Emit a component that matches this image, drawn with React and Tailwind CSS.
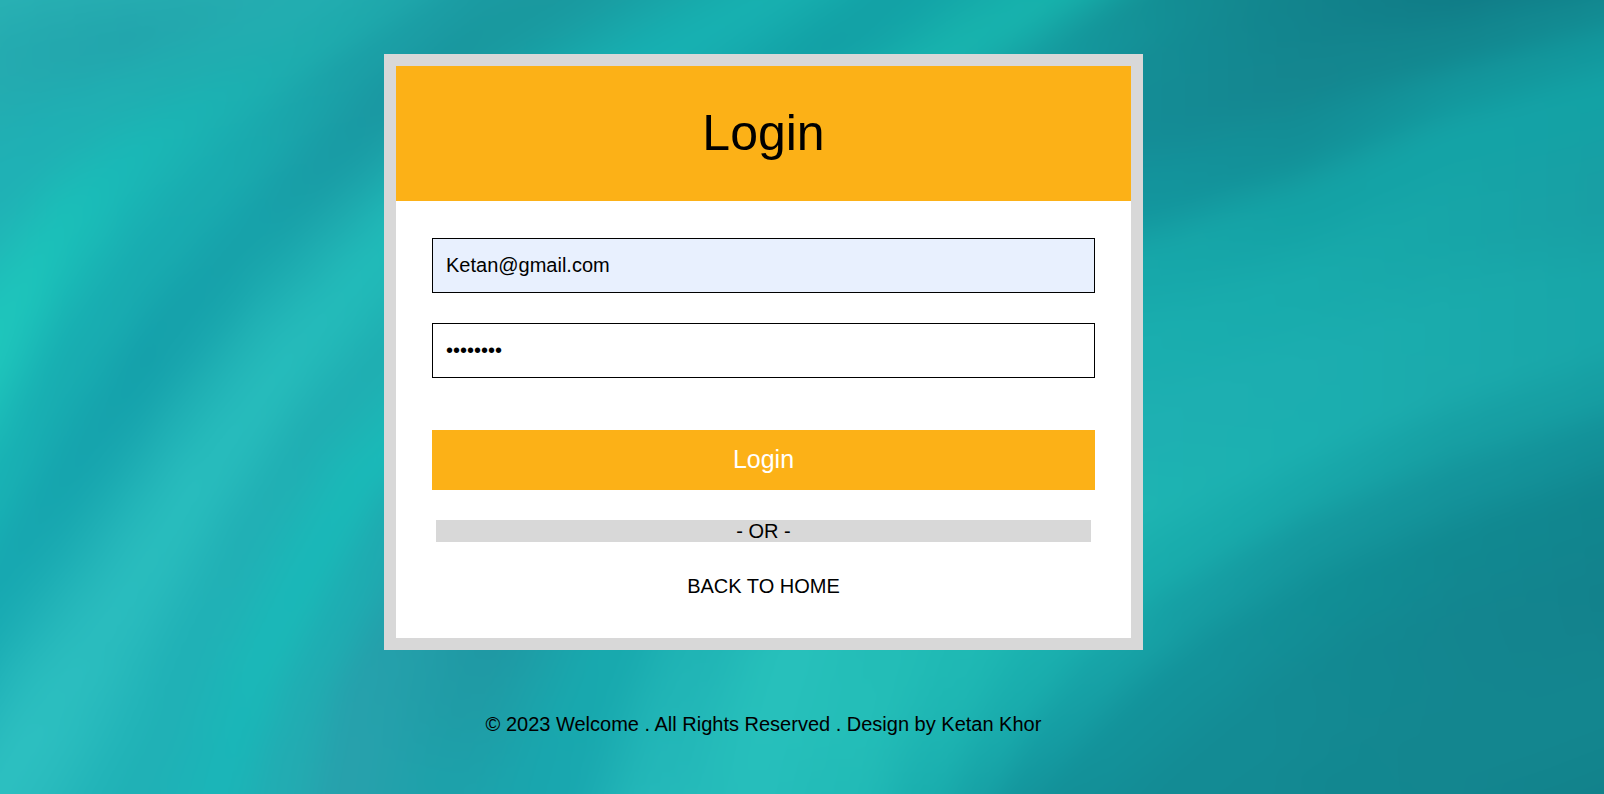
// Gradient mesh for the backdrop: every row is one fold line running from the
// lower left to the upper right, as [x, y, colour] knots.
const folds = [
  [[-60, 0, '2ab3b5'], [-20, -30, '2ab3b5'], [50, -40, '29b2b4'], [120, -45, '29b1b3'], [200, -50, '27afb1'], [260, -55, '24aeb1'], [320, -60, '24aeb1']],
  [[-60, 90, '23abb0'], [0, 65, '24abb0'], [60, 52, '23a8ae'], [130, 42, '22a6ad'], [190, 25, '23a9ae'], [250, 0, '24acb0'], [330, -40, '24aeb1']],
  [[-60, 230, '20b3b6'], [0, 180, '1fb1b5'], [50, 135, '1fb0b4'], [110, 98, '20afb2'], [180, 70, '20adb0'], [270, 28, '22adb0'], [370, -30, '22adb0']],
  [[-60, 430, '1fc6bc'], [0, 335, '1fc6bc'], [60, 235, '1bc0b9'], [120, 170, '1ab9b7'], [200, 110, '1bb3b3'], [310, 50, '1eacae'], [440, -25, '1fa5aa']],
  [[-60, 580, '18b0b4'], [0, 492, '18b1b4'], [65, 375, '18adb1'], [150, 265, '18abb0'], [235, 165, '19abaf'], [350, 72, '1ba0a7'], [500, -25, '1b9ba2']],
  [[-60, 680, '17a9b1'], [0, 570, '17a8b1'], [60, 480, '16a5ae'], [140, 362, '15a1ab'], [250, 230, '17a2aa'], [385, 100, '1a98a2'], [450, 54, '19989f'], [580, -25, '1a999f']],
  [[-40, 850, '2cbfc0'], [30, 740, '2cbfc0'], [110, 625, '2abcbe'], [190, 500, '28bcbd'], [280, 375, '26bbbb'], [400, 235, '20bab8'], [673, 54, '17b0b2'], [810, -25, '17b0af']],
  [[110, 850, '20b1b6'], [165, 740, '20b1b6'], [195, 650, '20b1b6'], [245, 540, '21b0b5'], [310, 435, '20afb3'], [400, 340, '1fafb2'], [820, 54, '13a1a6'], [920, -25, '13a2a6']],
  [[210, 850, '1cb4b8'], [238, 740, '1ab6b8'], [262, 665, '1bb8b8'], [310, 570, '1ab8b8'], [360, 480, '1ab9b8'], [440, 400, '1ab9b8'], [954, 54, '18b3ae'], [1080, -25, '16b2ac']],
  [[270, 850, '22adb3'], [288, 760, '22acb2'], [308, 690, '20adb2'], [345, 610, '1eadb2'], [395, 520, '1faab0'], [480, 440, '1ca8ae'], [1086, 54, '14969c'], [1210, -25, '138a90'], [1400, -60, '107c87'], [1680, -100, '107c87']],
  [[335, 850, '27a1ac'], [350, 760, '27a1ac'], [360, 690, '26a1ac'], [385, 640, '24a0ab'], [440, 560, '24a0ab'], [540, 480, '209aa4'], [1140, 62, '148e96'], [1300, 22, '12848d'], [1450, -8, '107c87'], [1680, -55, '107c87']],
  [[435, 850, '1fa1ab'], [450, 780, '1da1aa'], [468, 710, '1f9ca6'], [487, 650, '1f99a4'], [540, 570, '1f99a4'], [640, 480, '1a9ca4'], [1140, 125, '148c96'], [1300, 75, '14868f'], [1450, 48, '12878f'], [1680, -5, '128d94']],
  [[545, 850, '19a7af'], [560, 794, '19a7af'], [585, 715, '18a8ae'], [612, 650, '18a9ae'], [660, 570, '18a9ae'], [740, 490, '18a9ae'], [1140, 200, '13959d'], [1300, 145, '138f97'], [1450, 90, '13969c'], [1680, 22, '12989d']],
  [[640, 850, '24b8b9'], [655, 794, '24b8b9'], [675, 715, '22b6b7'], [695, 650, '20b4b5'], [740, 580, '20b4b5'], [820, 500, '1fb3b4'], [1140, 270, '17a8aa'], [1300, 208, '14a2a5'], [1450, 140, '14a3a6'], [1680, 70, '13a1a5']],
  [[735, 850, '26bebb'], [750, 794, '26bebb'], [770, 715, '27c0bb'], [790, 650, '27c0bb'], [840, 590, '26bfba'], [920, 510, '21b8b5'], [1140, 350, '1aaeaf'], [1300, 290, '18abac'], [1450, 225, '17a6a8'], [1680, 190, '199ba2']],
  [[835, 850, '22bbb7'], [850, 794, '22bbb7'], [865, 715, '24beb8'], [885, 650, '23bdb7'], [930, 600, '22bbb5'], [990, 530, '20b6b3'], [1140, 430, '1eb0b2'], [1300, 375, '1caeb0'], [1450, 325, '1aabac'], [1680, 270, '17a4a7']],
  [[910, 850, '1aaeae'], [930, 794, '1aaeae'], [945, 720, '1eb6b3'], [970, 650, '1fb9b4'], [1010, 605, '1fb8b3'], [1060, 560, '1eb6b2'], [1140, 510, '1eb4b2'], [1300, 445, '1bafb0'], [1450, 385, '1baaac'], [1680, 315, '17a4a7']],
  [[960, 850, '17a2a6'], [980, 794, '17a2a6'], [1005, 725, '19abac'], [1050, 650, '1ab0af'], [1080, 625, '1ab0af'], [1110, 600, '19afae'], [1150, 572, '19adad'], [1300, 492, '18a8aa'], [1450, 437, '17a0a4'], [1680, 370, '169da2']],
  [[995, 850, '14969d'], [1020, 794, '14969d'], [1055, 735, '159da3'], [1105, 665, '17a3a7'], [1125, 650, '17a3a7'], [1145, 635, '17a2a6'], [1180, 612, '169fa4'], [1310, 542, '15989e'], [1450, 488, '14949b'], [1680, 415, '128f97']],
  [[1035, 850, '139098'], [1065, 794, '139098'], [1105, 750, '13929a'], [1155, 705, '13929a'], [1180, 682, '13929a'], [1205, 665, '13929a'], [1235, 645, '139199'], [1330, 595, '118e95'], [1450, 550, '118991'], [1680, 480, '10848d']],
  [[1110, 870, '138b94'], [1140, 830, '138b94'], [1175, 790, '138b94'], [1210, 760, '138b94'], [1235, 740, '138b94'], [1260, 720, '138b94'], [1290, 700, '138a93'], [1370, 660, '128891'], [1470, 635, '13858f'], [1680, 575, '12818b']],
  [[1200, 900, '138891'], [1230, 880, '138891'], [1260, 860, '138891'], [1290, 840, '138891'], [1320, 825, '138891'], [1345, 810, '128790'], [1370, 795, '128790'], [1430, 770, '13868f'], [1520, 740, '13868f'], [1680, 680, '13868f']],
  [[1300, 950, '128790'], [1330, 940, '128790'], [1360, 930, '128790'], [1390, 920, '128790'], [1420, 910, '12868f'], [1450, 900, '12868f'], [1480, 890, '12848d'], [1540, 870, '11828c'], [1600, 850, '107f89'], [1700, 810, '107f89']],
];

const parse = ([x, y, hex]) => [x, y, ...[0, 2, 4].map((i) => parseInt(hex.slice(i, i + 2), 16))];
const mix = (a, b, t) => a.map((v, i) => v + (b[i] - v) * t);
const ease = (t) => t * t * (3 - 2 * t);

const rows = folds.map((row) => {
  const out = row.map(parse);
  while (out.length < 10) {
    const [x, y, ...rgb] = out[out.length - 1];
    out.push([x + 90, y - 40, ...rgb]);
  }
  return out;
});

const STEPS = 7;
function buildMesh() {
  const cells = [];
  for (let r = 0; r < rows.length - 1; r++) {
    for (let k = 0; k < 9; k++) {
      const at = (u, v) => mix(mix(rows[r][k], rows[r][k + 1], u), mix(rows[r + 1][k], rows[r + 1][k + 1], u), v);
      for (let i = 0; i < STEPS; i++) {
        for (let j = 0; j < STEPS; j++) {
          const quad = [[i, j], [i + 1, j], [i + 1, j + 1], [i, j + 1]].map(([a, b]) => at(a / STEPS, b / STEPS));
          if (quad.every((p) => p[1] < -40) || quad.every((p) => p[0] > 1650) || quad.every((p) => p[1] > 840)) continue;
          const rgb = mix(
            mix(rows[r][k], rows[r][k + 1], (i + 0.5) / STEPS),
            mix(rows[r + 1][k], rows[r + 1][k + 1], (i + 0.5) / STEPS),
            ease((j + 0.5) / STEPS),
          ).slice(2).map(Math.round);
          cells.push({ points: quad.map((p) => `${p[0].toFixed(1)},${p[1].toFixed(1)}`).join(' '), fill: `rgb(${rgb.join(',')})` });
        }
      }
    }
  }
  return cells;
}
const mesh = buildMesh();

function Backdrop() {
  return (
    <svg className="absolute inset-0 -z-10 h-full w-full" viewBox="0 0 1604 794" preserveAspectRatio="none" aria-hidden="true">
      <defs>
        <filter id="soft" filterUnits="userSpaceOnUse" x="-60" y="-60" width="1724" height="914" colorInterpolationFilters="sRGB">
          <feGaussianBlur stdDeviation="9" />
        </filter>
      </defs>
      <g filter="url(#soft)">
        <rect x="-60" y="-60" width="1724" height="914" fill="#22aeb2" />
        {mesh.map((c, i) => (
          <polygon key={i} points={c.points} fill={c.fill} stroke={c.fill} strokeWidth="1" />
        ))}
      </g>
    </svg>
  );
}

export default function App() {
  return (
    <main className="relative isolate flex h-[794px] w-full flex-col overflow-hidden pt-[54px] font-['Liberation_Sans',Arial,sans-serif] text-[20px] text-black">
      <Backdrop />
      <section className="ml-[384px] h-[596px] w-[759px] border-[12px] border-[#d8d8d8] bg-white">
        <h1 className="flex h-[135px] items-center justify-center bg-[#fcb117] pb-0.5 text-[50px] leading-none">Login</h1>
        <form className="flex flex-col px-9 pt-[37px]" onSubmit={(e) => e.preventDefault()}>
          <input type="text" defaultValue="Ketan@gmail.com" aria-label="Email" className="h-[55px] w-full border border-black bg-[#e8f0fe] px-[13px] outline-none" />
          <input type="password" defaultValue="password" aria-label="Password" className="mt-[30px] h-[55px] w-full border border-black bg-white px-[13px] outline-none" />
          <button type="submit" className="mt-[52px] h-[60px] w-full bg-[#fcb117] text-[25px] text-white">Login</button>
          <p className="mx-1 mt-[30px] h-[22px] bg-[#d8d8d8] text-center leading-[22px]">- OR -</p>
          <a href="#" className="mt-[33px] text-center leading-[22px]">BACK TO HOME</a>
        </form>
      </section>
      <footer className="ml-[384px] mt-[63px] w-[759px] text-center leading-[22px]">© 2023 Welcome . All Rights Reserved . Design by Ketan Khor</footer>
    </main>
  );
}
